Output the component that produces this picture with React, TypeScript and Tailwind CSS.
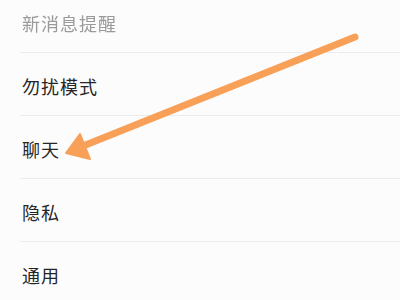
import React from "react";

const font = { fontFamily: '"Noto Sans CJK SC", "Noto Sans", sans-serif' };

export default function App() {
  const rows = ["勿扰模式", "聊天", "隐私", "通用"];
  return (
    <div className="relative w-[400px] h-[300px] overflow-hidden bg-[#fcfcfc]" style={font}>
      <div className="pl-[20px]">
        <div className="h-[52px] pl-[2px] pt-[12px]">
          <span className="text-[18px] leading-[20px] tracking-[1px] text-[#9a9a9a] blur-[0.4px]">新消息提醒</span>
        </div>
        {rows.map((r) => (
          <div key={r} className="h-[63px] border-t border-[#ececec] pl-[2px] flex items-center pt-[4px]">
            <span className="text-[18px] leading-[20px] tracking-[1px] font-normal text-[#262626]">{r}</span>
          </div>
        ))}
      </div>
      <svg className="absolute left-0 top-0" width="400" height="300" viewBox="0 0 400 300">
        <line x1="355" y1="37" x2="78" y2="148" stroke="#f9a058" strokeWidth="7" strokeLinecap="round" />
        <polygon points="66,153 80,134 90,159" fill="#f9a058" stroke="#f9a058" strokeWidth="2" strokeLinejoin="round" />
      </svg>
    </div>
  );
}
